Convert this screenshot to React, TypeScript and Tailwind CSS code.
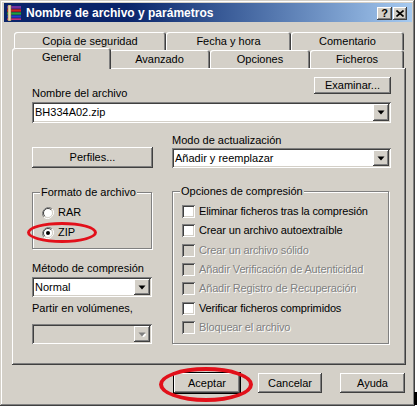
import React from 'react';

const raised = 'shadow-[inset_-1px_-1px_#404040,inset_1px_1px_#ffffff,inset_-2px_-2px_#808080]';
const sunken = 'shadow-[inset_1px_1px_#808080,inset_-1px_-1px_#ffffff,inset_2px_2px_#404040,inset_-2px_-2px_#d4d0c8]';
const etched = 'border border-[#808080] shadow-[inset_1px_1px_#ffffff,1px_1px_#ffffff]';
const dim = 'text-[#808080] [text-shadow:1px_1px_#ffffff]';

function Button({ label, className = '', isDefault = false }: { label: string; className?: string; isDefault?: boolean }) {
  return (
    <div
      className={`flex items-center justify-center bg-[#d4d0c8] ${raised} ${isDefault ? 'outline outline-1 outline-black' : ''} ${className}`}
    >
      {label}
    </div>
  );
}

function Arrow({ disabled = false }: { disabled?: boolean }) {
  return (
    <div className={`w-[16px] h-full flex items-center justify-center ${raised} bg-[#d4d0c8]`}>
      <svg width="8" height="5" viewBox="0 0 8 5">
        {disabled && <path d="M2 2h7L5.5 5.5z" fill="#fff" />}
        <path d="M0.5 0.5h7L4 4.5z" fill={disabled ? '#808080' : '#000'} />
      </svg>
    </div>
  );
}

function Combo({ value = '', disabled = false, className = '' }: { value?: string; disabled?: boolean; className?: string }) {
  return (
    <div className={`flex p-[2px] ${sunken} ${disabled ? 'bg-[#d4d0c8]' : 'bg-white'} ${className}`}>
      <div className="flex-1 flex items-center pl-[1px] leading-[13px]">{value}</div>
      <Arrow disabled={disabled} />
    </div>
  );
}

function Radio({ checked = false, label }: { checked?: boolean; label: string }) {
  return (
    <div className="flex items-center h-[13px] gap-[4px]">
      <svg width="12" height="12" viewBox="0 0 12 12">
        <path d="M10.2 1.8A6 6 0 0 0 1.8 10.2" stroke="#808080" strokeWidth="1" fill="none" />
        <path d="M1.8 10.2A6 6 0 0 0 10.2 1.8" stroke="#ffffff" strokeWidth="1" fill="none" />
        <circle cx="6" cy="6" r="4.5" fill="#fff" />
        <path d="M9.2 2.8A4.5 4.5 0 0 0 2.8 9.2" stroke="#404040" strokeWidth="1" fill="none" />
        <path d="M2.8 9.2A4.5 4.5 0 0 0 9.2 2.8" stroke="#d4d0c8" strokeWidth="1" fill="none" />
        {checked && <circle cx="6" cy="6" r="2" fill="#000" />}
      </svg>
      <span className="leading-[13px]">{label}</span>
    </div>
  );
}

function Check({ label, disabled = false }: { label: string; disabled?: boolean }) {
  return (
    <div className="flex items-center h-[13px] gap-[4px]">
      <div className={`w-[13px] h-[13px] ${sunken} ${disabled ? 'bg-[#d4d0c8]' : 'bg-white'}`} />
      <span className={`leading-[13px] tracking-[-0.15px] ${disabled ? dim : ''}`}>{label}</span>
    </div>
  );
}

function Tab({ label, w, selected = false }: { label: string; w: string; selected?: boolean }) {
  return (
    <div
      className={`${w} flex items-center justify-center bg-[#d4d0c8] rounded-t-[3px] shadow-[inset_1px_1px_#ffffff,inset_-1px_0_#404040,inset_-2px_0_#808080] ${
        selected ? 'relative z-10 h-[21px] -ml-[2px] -mr-[2px] -mb-[1px] pb-[3px]' : 'h-full'
      }`}
    >
      {label}
    </div>
  );
}

function RarIcon() {
  return (
    <svg width="16" height="16" viewBox="0 0 16 16">
      <rect x="1" y="1" width="14" height="3" fill="#7030a0" />
      <rect x="1" y="4" width="14" height="3" fill="#d02020" />
      <rect x="1" y="7" width="14" height="3" fill="#20a040" />
      <rect x="1" y="10" width="14" height="3" fill="#2040d0" />
      <rect x="1" y="13" width="14" height="2" fill="#c03080" />
      <path d="M1 4h14M1 7h14M1 10h14M1 13h14" stroke="#10103a" strokeWidth="0.6" />
      <rect x="2" y="0" width="3" height="16" fill="#e8dcb0" />
      <path d="M2 0h3v16H2z" fill="none" stroke="#806030" strokeWidth="0.5" />
    </svg>
  );
}

export default function App() {
  return (
    <div className="relative w-[417px] h-[408px] bg-white overflow-hidden font-['Liberation_Sans',Arial,sans-serif] text-[11px] text-black">
      <div className="w-[415px] h-[406px] bg-[#d4d0c8] pt-[3px] pl-[4px] pr-[3px] flex flex-col shadow-[inset_-1px_-1px_#404040,inset_1px_1px_#d4d0c8,inset_-2px_-2px_#808080,inset_2px_2px_#ffffff]">
        {/* title bar */}
        <div className="h-[19px] flex items-center bg-linear-to-r from-[#0a246a] via-[#0a246a] via-30% to-[#a6caf0] pl-[2px] pr-[5px]">
          <RarIcon />
          <span className="ml-[4px] flex-1 text-white font-bold text-[12px] leading-[14px]">
            Nombre de archivo y parámetros
          </span>
          <div className="flex gap-[1px] mt-[2px]">
            <div className={`w-[15px] h-[13px] bg-[#d4d0c8] ${raised} flex items-center justify-center font-bold text-[11px] leading-[11px]`}>?</div>
            <div className={`w-[14px] h-[13px] bg-[#d4d0c8] ${raised} flex items-center justify-center`}>
              <svg width="8" height="7" viewBox="0 0 8 7">
                <path d="M0.5 0.5l7 6M7.5 0.5l-7 6" stroke="#000" strokeWidth="1.6" />
              </svg>
            </div>
          </div>
        </div>

        <div className="ml-[8px] w-[394px] flex flex-col">
          {/* tabs */}
          <div className="mt-[10px] ml-[2px] h-[18px] flex">
            <Tab label="Copia de seguridad" w="w-[152px]" />
            <Tab label="Fecha y hora" w="w-[125px]" />
            <Tab label="Comentario" w="w-[113px]" />
          </div>
          <div className="ml-[2px] h-[18px] flex items-end">
            <Tab label="General" w="w-[99px]" selected />
            <Tab label="Avanzado" w="w-[101px]" />
            <Tab label="Opciones" w="w-[100px]" />
            <Tab label="Ficheros" w="w-[94px]" />
          </div>

          {/* panel */}
          <div className={`h-[297px] ${raised} pt-[9px] pl-[20px] pr-[15px] flex flex-col`}>
            <div className="flex justify-between">
              <span className="pt-[10px] leading-[13px]">Nombre del archivo</span>
              <Button label="Examinar..." className="w-[77px] h-[17px]" />
            </div>
            <Combo value="BH334A02.zip" className="mt-[2px] h-[21px]" />

            <div className="mt-[11px] grid grid-cols-[121px_1fr] gap-x-[19px] items-end">
              <Button label="Perfiles..." className="h-[21px]" />
              <div className="flex flex-col">
                <span className="leading-[13px]">Modo de actualización</span>
                <Combo value="Añadir y reemplazar" className="mt-[1px] h-[20px]" />
              </div>
            </div>

            <div className="mt-[18px] flex gap-x-[20px]">
              <div className="w-[120px] flex flex-col">
                <div className={`mt-[6px] h-[57px] ${etched} flex flex-col pl-[9px]`}>
                  <span className="-mt-[7px] -ml-[2px] self-start px-[1px] bg-[#d4d0c8] leading-[13px]">Formato de archivo</span>
                  <div className="mt-[7px] flex flex-col gap-[7px]">
                    <Radio label="RAR" />
                    <Radio label="ZIP" checked />
                  </div>
                </div>
                <span className="mt-[13px] leading-[13px]">Método de compresión</span>
                <Combo value="Normal" className="mt-[2px] h-[20px]" />
                <span className="mt-[5px] leading-[13px]">Partir en volúmenes,</span>
                <Combo disabled className="mt-[9px] h-[20px]" />
              </div>

              <div className={`w-[217px] mt-[5px] h-[153px] ${etched} flex flex-col pl-[9px]`}>
                <span className="-mt-[7px] -ml-[2px] self-start px-[1px] bg-[#d4d0c8] leading-[13px]">Opciones de compresión</span>
                <div className="mt-[7px] flex flex-col gap-[6.33px]">
                  <Check label="Eliminar ficheros tras la compresión" />
                  <Check label="Crear un archivo autoextraíble" />
                  <Check label="Crear un archivo sólido" disabled />
                  <Check label="Añadir Verificación de Autenticidad" disabled />
                  <Check label="Añadir Registro de Recuperación" disabled />
                  <Check label="Verificar ficheros comprimidos" />
                  <Check label="Bloquear el archivo" disabled />
                </div>
              </div>
            </div>
          </div>

          {/* buttons */}
          <div className="mt-[8px] flex justify-end gap-[18px] pr-[1px]">
            <Button label="Aceptar" isDefault className="w-[66px] h-[20px]" />
            <Button label="Cancelar" className="w-[64px] h-[20px]" />
            <Button label="Ayuda" className="w-[65px] h-[20px]" />
          </div>
        </div>
      </div>

      {/* red annotation marks */}
      <div className="absolute left-[27px] top-[222px] w-[70px] h-[21px] rounded-[50%] border-[3px] border-[#e2101a]" />
      <div className="absolute left-[159px] top-[367px] w-[94px] h-[35px] rounded-[50%] border-[4px] border-[#e2101a]" />
      <div className="absolute left-[414px] top-[392px] w-[3px] h-[13px] bg-black" />
    </div>
  );
}
